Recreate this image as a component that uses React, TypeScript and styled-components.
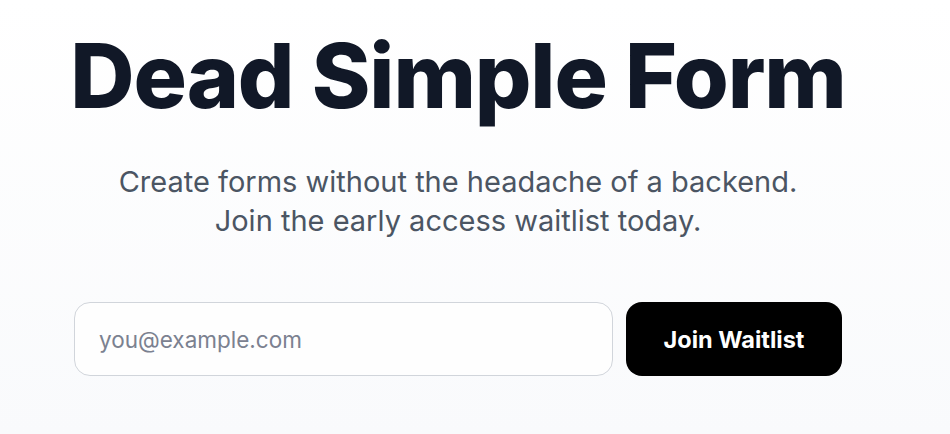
import React from 'react';
import styled, { createGlobalStyle } from 'styled-components';

const GlobalStyle = createGlobalStyle`
  html, body {
    margin: 0;
    padding: 0;
  }
  body {
    font-family: Inter, "Noto Sans", "Liberation Sans", sans-serif;
    background: linear-gradient(180deg, #ffffff 0%, #f9fafc 100%);
    min-height: 100vh;
  }
`;

const Page = styled.main`
  min-height: 100vh;
  box-sizing: border-box;
  display: flex;
  flex-direction: column;
  align-items: center;
  padding: 31px 34px 0 0;
`;

const Title = styled.h1`
  margin: 0;
  font-size: 89px;
  line-height: 1;
  font-weight: 800;
  letter-spacing: -0.013em;
  color: #111827;
`;

const Subtitle = styled.p`
  margin: 42px 0 0;
  font-size: 29px;
  line-height: 39px;
  font-weight: 400;
  color: #4b5563;
  text-align: center;
`;

const Form = styled.form`
  margin-top: 62px;
  width: 768px;
  display: flex;
  gap: 13px;
`;

const EmailInput = styled.input`
  flex: 1;
  height: 74px;
  box-sizing: border-box;
  padding: 0 24px;
  border: 1px solid #d1d5db;
  border-radius: 16px;
  background: #fefefe;
  font-family: inherit;
  font-size: 22.5px;
  color: #111827;
  outline: none;

  &::placeholder {
    color: #7b8190;
  }
`;

const JoinButton = styled.button`
  width: 216px;
  height: 74px;
  border: none;
  border-radius: 16px;
  background: #000000;
  color: #ffffff;
  font-family: inherit;
  font-size: 23.5px;
  font-weight: 700;
  cursor: pointer;
`;

const App = () => {
  return (
    <>
      <GlobalStyle />
      <Page>
        <Title>Dead Simple Form</Title>
        <Subtitle>
          Create forms without the headache of a backend.
          <br />
          Join the early access waitlist today.
        </Subtitle>
        <Form onSubmit={(e) => e.preventDefault()}>
          <EmailInput type="email" placeholder="you@example.com" />
          <JoinButton type="submit">Join Waitlist</JoinButton>
        </Form>
      </Page>
    </>
  );
};

export default App;
